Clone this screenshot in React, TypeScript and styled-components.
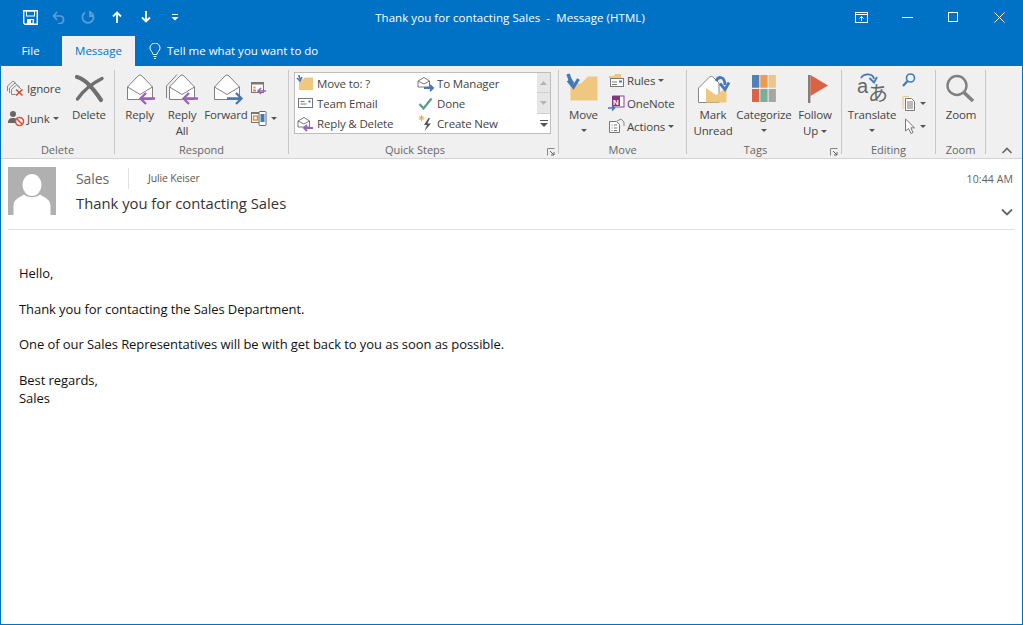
import React from "react";
import styled, { createGlobalStyle } from "styled-components";

const Global = createGlobalStyle`
  html, body { margin: 0; padding: 0; background: #fff; }
  body { font-family: "Open Sans", "Noto Sans", "Liberation Sans", sans-serif; }
`;

const Frame = styled.div`
  width: 1023px; height: 625px; box-sizing: border-box; background: #fff;
  border: 1px solid #0072c6; border-top: 0; display: flex; flex-direction: column; overflow: hidden;
`;
const TitleBar = styled.div`
  height: 36px; flex: none; box-sizing: border-box; padding-bottom: 2px; background: #0072c6; color: #fff;
  display: grid; grid-template-columns: 1fr auto 1fr; align-items: center;
`;
const Qat = styled.div`display: flex; align-items: center; padding-left: 20px; gap: 11px;`;
const QatBtn = styled.span`width: 18px; height: 18px; display: flex; align-items: center; justify-content: center;`;
const WindowTitle = styled.div`font-size: 11.5px; letter-spacing: 0.06px; white-space: pre; margin-left: -3px;`;
const WinControls = styled.div`display: flex; justify-content: flex-end; align-items: center;`;
const WinBtn = styled.span`width: 46px; height: 32px; display: flex; align-items: center; justify-content: center;`;

const TabBar = styled.div`
  height: 30px; flex: none; background: #0072c6; display: flex; align-items: stretch; color: #fff; font-size: 11.5px;
`;
const Tab = styled.div<{ $active?: boolean; $w: number; $pr?: number }>`
  width: ${p => p.$w}px; display: flex; align-items: center; justify-content: center; box-sizing: border-box;
  padding: 0 ${p => p.$pr ?? 0}px 1px 0;
  background: ${p => (p.$active ? "#f0f0f0" : "transparent")};
  color: ${p => (p.$active ? "#0072c6" : "#fff")};
`;
const TellMe = styled.div`display: flex; align-items: center; gap: 6px; margin-left: 14px; padding-bottom: 1px;`;

const Ribbon = styled.div`
  height: 93px; flex: none; box-sizing: border-box; background: #f0f0f0; border-bottom: 1px solid #d4d4d4;
  display: flex; padding-top: 4px; color: #444; font-size: 11.5px; letter-spacing: -0.15px; position: relative;
`;
const Group = styled.div<{ $w: number }>`
  width: ${p => p.$w}px; height: 84px; box-sizing: border-box; border-right: 1px solid #c8c8c8; flex: none;
  display: flex; flex-direction: column; position: relative;
`;
const GroupBody = styled.div<{ $pl?: number }>`
  flex: 1; display: flex; align-items: flex-start; padding-left: ${p => p.$pl ?? 0}px; min-height: 0;
`;
const GroupLabel = styled.div<{ $launcher?: boolean }>`
  height: 16px; line-height: 16px; margin-bottom: -4px; text-align: center; color: #666; font-size: 11px; letter-spacing: 0; flex: none;
  padding-right: ${p => (p.$launcher ? 17 : 0)}px;
`;
const Launcher = styled.svg`position: absolute; right: 3px; bottom: -2px;`;
const LargeBtn = styled.div<{ $w: number }>`
  width: ${p => p.$w}px; flex: none; display: flex; flex-direction: column; align-items: center; line-height: 16px;
  white-space: nowrap; text-align: center;
`;
const LargeIcon = styled.div`height: 37px; display: flex; align-items: center; justify-content: center;`;
const SmallCol = styled.div<{ $w?: number; $gap: number; $pt: number }>`
  ${p => (p.$w ? `width:${p.$w}px;` : "")} flex: none; display: flex; flex-direction: column; gap: ${p => p.$gap}px; padding-top: ${p => p.$pt}px;
`;
const SmallBtn = styled.div`display: flex; align-items: center; height: 18px; gap: 2px; white-space: nowrap;`;
const Caret = styled.i`
  display: inline-block; width: 0; height: 0; border-left: 3px solid transparent; border-right: 3px solid transparent;
  border-top: 3px solid #555; margin-left: 1px;
`;
const BlockCaret = styled(Caret)`display: block; margin: 6px 0 0 0;`;
const InlineCaret = styled(Caret)`margin-left: 3px; vertical-align: middle;`;
const Gallery = styled.div`
  margin: 2px 0 0 5px; width: 257px; height: 62px; box-sizing: border-box; background: #fff; border: 1px solid #bdbdbd;
  display: flex; position: relative;
`;
const GalleryGrid = styled.div`
  flex: 1; display: grid; grid-template-columns: 120px 1fr; grid-auto-rows: 20px;
`;
const GalleryItem = styled.div`display: flex; align-items: center; gap: 3px; padding-left: 2px; white-space: nowrap;`;
const GalleryIcon = styled.span`width: 17px; display: flex; justify-content: center;`;
const Scroll = styled.div`width: 13px; display: flex; flex-direction: column; flex: none;`;
const ScrollBtn = styled.div<{ $dim?: boolean }>`
  flex: 1; display: flex; align-items: center; justify-content: center;
  background: ${p => (p.$dim ? "#e6e6e6" : "#fff")};
  border-bottom: ${p => (p.$dim ? "1px solid #cfcfcf" : "0")};
`;
const Collapse = styled.svg`position: absolute; left: 1000px; top: 81px;`;

const Header = styled.div`
  margin: 8px 7px 0 7px; height: 62px; border-bottom: 1px solid #e1e1e1; flex: none; display: flex; position: relative;
`;
const Avatar = styled.svg`flex: none; display: block;`;
const HeaderText = styled.div`margin-left: 20px; display: flex; flex-direction: column;`;
const FromRow = styled.div`display: flex; align-items: center; height: 22px;`;
const Sender = styled.span`font-size: 14px; color: #666; width: 52px; border-right: 1px solid #e1e1e1; height: 21px; line-height: 21px; letter-spacing: -0.1px;`;
const Recipient = styled.span`font-size: 10.5px; color: #5f5a50; margin-left: 19px; letter-spacing: -0.15px;`;
const Subject = styled.div`font-size: 14.8px; color: #333; margin-top: 4px; line-height: 20px;`;
const Time = styled.div`position: absolute; right: 2px; top: 5px; font-size: 10.5px; color: #5f5f5f; letter-spacing: 0.1px;`;
const Expand = styled.svg`position: absolute; right: 2px; top: 41px;`;
const Body = styled.div`padding: 35px 0 0 18px; font-size: 13px; line-height: 17.8px; color: #111; letter-spacing: -0.07px;`;
const Line = styled.div`white-space: pre; min-height: 17.8px;`;

const IconBase = ({ w, h, children }: { w: number; h: number; children: React.ReactNode }) => (
  <svg width={w} height={h} viewBox={`0 0 ${w} ${h}`} fill="none" overflow="visible">{children}</svg>
);

const PURPLE = "#9a62b8";
const BLUE = "#4379b8";
const GREY = "#808080";
const FOLDER = "#efc77f";

const ArrowL = ({ x, y }: { x: number; y: number }) => (
  <path d={`M${x + 1} ${y}h15M${x + 7} ${y - 5.5}L${x + 1.5} ${y}L${x + 7} ${y + 5.5}`} stroke={PURPLE} strokeWidth={2.3} />
);
const ArrowR = ({ x, y }: { x: number; y: number }) => (
  <path d={`M${x} ${y}h15M${x + 9} ${y - 5.5}L${x + 14.5} ${y}L${x + 9} ${y + 5.5}`} stroke={BLUE} strokeWidth={2.3} />
);
const Env = ({ dx = 0 }: { dx?: number }) => (
  <g transform={`translate(${dx} 0)`}>
    <path d="M0.5 14L11 3C12.2 1.7 13.8 1.7 15 3L25.5 14V26.5H0.5Z" fill="#fff" stroke={GREY} />
    <path d="M0.5 14L13 21.5L25.5 14" stroke={GREY} />
  </g>
);
const ReplyIcon = () => (
  <IconBase w={32} h={32}><Env dx={3} /><ArrowL x={15} y={25.5} /></IconBase>
);
const ReplyAllIcon = () => (
  <IconBase w={34} h={32}>
    <path d="M1.5 13L12 1.5M1.5 13V25" stroke={GREY} />
    <Env dx={4} /><ArrowL x={17} y={25.5} />
  </IconBase>
);
const ForwardIcon = () => (
  <IconBase w={32} h={32}><Env dx={4} /><ArrowR x={17} y={25.5} /></IconBase>
);
const BigX = () => (
  <IconBase w={32} h={32}>
    <path d="M4 4C13 6 22 18 28 27" stroke="#6f6f6f" strokeWidth="4.2" strokeLinecap="round" />
    <path d="M29 5.5C20 10 10 18 4.5 26" stroke="#6f6f6f" strokeWidth="3.4" strokeLinecap="round" />
  </IconBase>
);
const IgnoreIcon = () => (
  <IconBase w={18} h={18}>
    <path d="M0.5 7L6 2l3 2.5M2.5 9L8 4l5 4.5M4.5 10.5L9.5 6l5 4.5M0.5 7v5M2.5 9v5M4.5 10.5v5h4" stroke="#888" />
    <path d="M9 10.5l6.5 6M15.5 10.5l-6.5 6" stroke="#d8503c" strokeWidth="1.7" />
  </IconBase>
);
const JunkIcon = () => (
  <IconBase w={18} h={18}>
    <circle cx="6" cy="5" r="3" fill="#666" />
    <path d="M1 14c0-4 2-5 5-5s5 1 5 5Z" fill="#666" />
    <circle cx="12.5" cy="12.5" r="4" fill="#fff" stroke="#d8503c" strokeWidth="1.6" />
    <path d="M10 10l5 5" stroke="#d8503c" strokeWidth="1.6" />
  </IconBase>
);
const MeetingIcon = () => (
  <IconBase w={18} h={16}>
    <rect x="1.5" y="2.5" width="12" height="10" fill="#fff" stroke="#777" />
    <rect x="1" y="2" width="13" height="2.5" fill="#777" />
    <rect x="3.5" y="6.5" width="2" height="2" fill="#e08a3c" />
    <rect x="3" y="9.5" width="3" height="2" fill="#e08a3c" />
    <path d="M8 11h8M11 8l-3 3 3 3" stroke={PURPLE} strokeWidth="1.6" />
  </IconBase>
);
const MoreRespondIcon = () => (
  <IconBase w={18} h={18}>
    <rect x="1.5" y="3.5" width="10" height="10" fill="#fff" stroke="#777" />
    <rect x="1" y="3" width="11" height="2" fill="#777" />
    <rect x="3.5" y="7" width="4" height="4" fill="none" stroke="#e08a3c" strokeWidth="1.4" />
    <rect x="9" y="2.5" width="7" height="14" rx="1" fill="#fff" stroke="#666" />
    <rect x="10.5" y="5" width="4" height="8" fill={BLUE} />
  </IconBase>
);
const FolderMove = () => (
  <IconBase w={17} h={15}>
    <path d="M2 6L8 1.5h8V14H2Z" fill={FOLDER} />
    <path d="M2 -1C2 1 2.5 2 3 3M0 2L3 5L5 1" stroke={BLUE} strokeWidth="1.6" />
  </IconBase>
);
const TeamEmail = () => (
  <IconBase w={15} h={12}>
    <rect x="0.5" y="1.5" width="14" height="9" fill="#fff" stroke="#777" />
    <path d="M2.5 4.5h4M2.5 7h6" stroke="#777" /><rect x="10.5" y="3.5" width="2" height="2" fill={BLUE} />
  </IconBase>
);
const MiniEnv = ({ c, left }: { c: string; left?: boolean }) => (
  <IconBase w={17} h={15}>
    <path d="M1 5L7 1.5L12.5 5V11H1Z" fill="#fff" stroke="#777" /><path d="M1 5L7 8L12.5 5" stroke="#777" />
    <path d={left ? "M7 12h9M10 9l-3 3 3 3" : "M7 12h9M13 9l3 3-3 3"} stroke={c} strokeWidth="1.8" />
  </IconBase>
);
const Check = () => (
  <IconBase w={15} h={13}><path d="M1.5 7L5.5 11.5L13.5 1.5" stroke="#5c9e8c" strokeWidth="2.4" /></IconBase>
);
const Bolt = () => (
  <IconBase w={15} h={16}>
    <path d="M10.5 3L6 10h3l-2.5 6L13 8.5H9.5L12 3Z" fill="#555" />
    <path d="M3.5 0v6M0.5 3h6M1.5 1l4 4M5.5 1l-4 4" stroke="#e8a33c" strokeWidth="0.9" />
  </IconBase>
);
const MoveBig = () => (
  <IconBase w={32} h={30}>
    <path d="M2.5 9.5L13 9.5L20 2.5H29.5V26.5H2.5Z" fill={FOLDER} />
    <path d="M0 0C1 4 2.5 7 5 10" stroke={BLUE} strokeWidth="3.4" />
    <path d="M0 6.5L5.5 13L10.5 5" fill="none" stroke={BLUE} strokeWidth="3.2" />
  </IconBase>
);
const RulesIcon = () => (
  <IconBase w={17} h={15}>
    <path d="M1 3h5l1-2h6v4H1Z" fill={FOLDER} />
    <rect x="2.5" y="5.5" width="13" height="8" fill="#fff" stroke="#777" />
    <path d="M4 9h5M4 11.5h5" stroke="#777" /><rect x="11" y="7.5" width="3" height="2" fill={BLUE} />
  </IconBase>
);
const OneNoteIcon = () => (
  <IconBase w={17} h={16}>
    <rect x="5" y="1" width="11" height="11" fill="#fff" stroke="#8e3f9e" />
    <rect x="4" y="1" width="8" height="10" fill="#80397b" />
    <text x="5" y="9.5" fontSize="8" fill="#fff" fontFamily="Liberation Sans" fontWeight="700">N</text>
    <path d="M0 13h6M4 10.5L6.5 13 4 15.5" stroke={BLUE} strokeWidth="1.6" />
  </IconBase>
);
const ActionsIcon = () => (
  <IconBase w={17} h={16}>
    <path d="M1.5 3.5h7l3 3v8h-10Z" fill="#fff" stroke="#777" />
    <path d="M3.5 7h1M6 7h3M3.5 10h1M6 10h3M3.5 12.5h1M6 12.5h3" stroke="#777" />
    <path d="M9 3L13 1l3 3v4" stroke="#888" />
  </IconBase>
);
const MarkUnread = () => (
  <IconBase w={32} h={30}>
    <path d="M1.5 14L12 3.5C13.5 2 15 2 16.5 3.5L22 9V28.5H1.5Z" fill="#fff" stroke="#888" />
    <path d="M9 14L19 21L29.5 14V28.5H9Z" fill={FOLDER} />
    <path d="M19 7C22 1 28 3 28 11" stroke={BLUE} strokeWidth="2.8" />
    <path d="M23 9.5L28 15.5L32 8.5" stroke={BLUE} strokeWidth="2.8" />
  </IconBase>
);
const Categorize = () => (
  <IconBase w={24} h={27}>
    <rect x="0" y="0" width="7.3" height="12.7" fill="#4f81bd" />
    <rect x="8.3" y="0" width="7.3" height="12.7" fill="#ec9c4c" />
    <rect x="16.6" y="0" width="7.3" height="12.7" fill="#e9c78a" />
    <rect x="0" y="14" width="7.3" height="13" fill="#d9644a" />
    <rect x="8.3" y="14" width="7.3" height="13" fill="#7cae9a" />
    <rect x="16.6" y="14" width="7.3" height="13" fill="#a6a6a6" />
  </IconBase>
);
const Flag = () => (
  <IconBase w={26} h={28}>
    <rect x="6" y="0" width="2.4" height="28" fill="#7f7f7f" />
    <path d="M8.4 0L26 10.5L8.4 21Z" fill="#dc6244" />
  </IconBase>
);
const TranslateIcon = () => (
  <IconBase w={34} h={34}>
    <text x="2" y="21" fontSize="20" fill="#666" fontFamily="Liberation Sans">a</text>
    <text x="13" y="29" fontSize="20" fill="#666" fontFamily="Noto Sans CJK JP">あ</text>
    <path d="M6 6C9 1 18 1 19 7" stroke={BLUE} strokeWidth="1.8" />
    <path d="M14.5 6L19 10.5L22 5" stroke={BLUE} strokeWidth="1.8" />
  </IconBase>
);
const FindIcon = () => (
  <IconBase w={16} h={16}>
    <circle cx="8.5" cy="6" r="4" stroke={BLUE} strokeWidth="1.6" />
    <path d="M5.5 9L1 14" stroke={BLUE} strokeWidth="2.2" />
  </IconBase>
);
const DocIcon = () => (
  <IconBase w={15} h={16}>
    <path d="M1 14V1.5H7" stroke={FOLDER} />
    <path d="M3.5 3.5h6l3 3v9h-9Z" fill="#fff" stroke="#777" />
    <path d="M5 7h6M5 9h6M5 11h6M5 13h6" stroke="#777" />
  </IconBase>
);
const CursorIcon = () => (
  <IconBase w={15} h={16}>
    <path d="M3.5 1V13L6.5 10.5L9 15.5L11 14.5L8.8 9.8H12.5Z" fill="#fff" stroke="#777" />
  </IconBase>
);
const ZoomIcon = () => (
  <IconBase w={30} h={30}>
    <circle cx="11" cy="11.5" r="9.5" stroke="#808080" strokeWidth="2.4" />
    <path d="M18 18.5L27 27" stroke="#808080" strokeWidth="3.6" />
  </IconBase>
);
const LauncherIcon = () => (
  <Launcher width={8} height={8} viewBox="0 0 8 8" fill="none">
    <path d="M0.5 7.5V0.5H7.5" stroke="#888" /><path d="M3 3L7 7M7 4V7H4" stroke="#666" />
  </Launcher>
);

const App = () => (
  <>
    <Global />
    <Frame>
      <TitleBar>
        <Qat>
          <QatBtn>
            <svg width="15" height="15" viewBox="0 0 15 15" fill="none">
              <path d="M0.7 0.7H14.3V14.3H2L0.7 13Z" stroke="#fff" strokeWidth="1.4" />
              <rect x="3.5" y="1" width="8" height="5" stroke="#fff" />
              <rect x="4" y="9" width="7" height="5.5" fill="#fff" /><rect x="8" y="10" width="1.6" height="3" fill="#0072c6" />
            </svg>
          </QatBtn>
          <QatBtn>
            <svg width="14" height="14" viewBox="0 0 14 14" fill="none" stroke="#5a9fd8" strokeWidth="1.7">
              <path d="M1.5 6h7.5a4 4 0 0 1 0 7.5H6M5 2L1.5 6L5 10" />
            </svg>
          </QatBtn>
          <QatBtn>
            <svg width="14" height="14" viewBox="0 0 14 14" fill="none" stroke="#5a9fd8" strokeWidth="1.8">
              <path d="M4 2.5A5.6 5.6 0 1 0 10 2.5M9 1v5h4" />
            </svg>
          </QatBtn>
          <QatBtn>
            <svg width="10" height="12" viewBox="0 0 10 12" fill="none" stroke="#fff" strokeWidth="1.8">
              <path d="M5 12V1.5M1 5.5L5 1.5L9 5.5" />
            </svg>
          </QatBtn>
          <QatBtn>
            <svg width="10" height="12" viewBox="0 0 10 12" fill="none" stroke="#fff" strokeWidth="1.8">
              <path d="M5 0V10.5M1 6.5L5 10.5L9 6.5" />
            </svg>
          </QatBtn>
          <QatBtn>
            <svg width="8" height="7" viewBox="0 0 8 7">
              <rect x="1" y="0" width="6" height="1" fill="#fff" /><path d="M0.5 3h7L4 6.5Z" fill="#fff" />
            </svg>
          </QatBtn>
        </Qat>
        <WindowTitle>Thank you for contacting Sales  -  Message (HTML)</WindowTitle>
        <WinControls>
          <WinBtn>
            <svg width="13" height="11" viewBox="0 0 13 11" fill="none" stroke="#fff">
              <rect x="0.5" y="0.5" width="12" height="10" /><path d="M0.5 2.5h12M6.5 9V4.5M4.5 6.5l2-2 2 2" />
            </svg>
          </WinBtn>
          <WinBtn><svg width="11" height="1"><rect width="11" height="1" fill="#fff" /></svg></WinBtn>
          <WinBtn><svg width="10" height="10" fill="none" stroke="#fff"><rect x="0.5" y="0.5" width="9" height="9" /></svg></WinBtn>
          <WinBtn><svg width="11" height="11" fill="none" stroke="#fff"><path d="M0.5 0.5L10.5 10.5M10.5 0.5L0.5 10.5" /></svg></WinBtn>
        </WinControls>
      </TitleBar>
      <TabBar>
        <Tab $w={61} $pr={2}>File</Tab>
        <Tab $w={73} $active>Message</Tab>
        <TellMe>
          <svg width="12" height="16" viewBox="0 0 12 16" fill="none" stroke="#fff">
            <path d="M4 11.5C4 9 1 8 1 5a5 5 0 0 1 10 0c0 3-3 4-3 6.5ZM4.5 13.5h3M5 15.5h2" />
          </svg>
          Tell me what you want to do
        </TellMe>
      </TabBar>
      <Ribbon>
        <Group $w={114}>
          <GroupBody $pl={6}>
            <SmallCol $w={58} $gap={12} $pt={9}>
              <SmallBtn><IgnoreIcon />Ignore</SmallBtn>
              <SmallBtn><JunkIcon />Junk<Caret /></SmallBtn>
            </SmallCol>
            <LargeBtn $w={48}><LargeIcon><BigX /></LargeIcon>Delete</LargeBtn>
          </GroupBody>
          <GroupLabel>Delete</GroupLabel>
        </Group>
        <Group $w={174}>
          <GroupBody $pl={2}>
            <LargeBtn $w={45}><LargeIcon><ReplyIcon /></LargeIcon>Reply</LargeBtn>
            <LargeBtn $w={40}><LargeIcon><ReplyAllIcon /></LargeIcon>Reply<br />All</LargeBtn>
            <LargeBtn $w={48}><LargeIcon><ForwardIcon /></LargeIcon>Forward</LargeBtn>
            <SmallCol $gap={12} $pt={9}>
              <SmallBtn><MeetingIcon /></SmallBtn>
              <SmallBtn><MoreRespondIcon /><Caret /></SmallBtn>
            </SmallCol>
          </GroupBody>
          <GroupLabel>Respond</GroupLabel>
        </Group>
        <Group $w={270}>
          <GroupBody>
            <Gallery>
              <GalleryGrid>
                <GalleryItem><GalleryIcon><FolderMove /></GalleryIcon>Move to: ?</GalleryItem>
                <GalleryItem><GalleryIcon><MiniEnv c={BLUE} /></GalleryIcon>To Manager</GalleryItem>
                <GalleryItem><GalleryIcon><TeamEmail /></GalleryIcon>Team Email</GalleryItem>
                <GalleryItem><GalleryIcon><Check /></GalleryIcon>Done</GalleryItem>
                <GalleryItem><GalleryIcon><MiniEnv c={PURPLE} left /></GalleryIcon>Reply &amp; Delete</GalleryItem>
                <GalleryItem><GalleryIcon><Bolt /></GalleryIcon>Create New</GalleryItem>
              </GalleryGrid>
              <Scroll>
                <ScrollBtn $dim><svg width="7" height="4"><path d="M0 4L3.5 0L7 4Z" fill="#b5b5b5" /></svg></ScrollBtn>
                <ScrollBtn $dim><svg width="7" height="4"><path d="M0 0L3.5 4L7 0Z" fill="#b5b5b5" /></svg></ScrollBtn>
                <ScrollBtn><svg width="8" height="7"><rect x="0" y="0" width="8" height="1" fill="#555" /><path d="M0 3h8L4 7Z" fill="#555" /></svg></ScrollBtn>
              </Scroll>
            </Gallery>
          </GroupBody>
          <GroupLabel $launcher>Quick Steps</GroupLabel>
          <LauncherIcon />
        </Group>
        <Group $w={128}>
          <GroupBody>
            <LargeBtn $w={49}><LargeIcon><MoveBig /></LargeIcon>Move<BlockCaret /></LargeBtn>
            <SmallCol $gap={5} $pt={1}>
              <SmallBtn><RulesIcon />Rules<Caret /></SmallBtn>
              <SmallBtn><OneNoteIcon />OneNote</SmallBtn>
              <SmallBtn><ActionsIcon />Actions<Caret /></SmallBtn>
            </SmallCol>
          </GroupBody>
          <GroupLabel>Move</GroupLabel>
        </Group>
        <Group $w={155}>
          <GroupBody>
            <LargeBtn $w={52}><LargeIcon><MarkUnread /></LargeIcon>Mark<br />Unread</LargeBtn>
            <LargeBtn $w={50}><LargeIcon><Categorize /></LargeIcon>Categorize<BlockCaret /></LargeBtn>
            <LargeBtn $w={52}><LargeIcon><Flag /></LargeIcon>Follow<span>Up<InlineCaret /></span></LargeBtn>
          </GroupBody>
          <GroupLabel $launcher>Tags</GroupLabel>
          <LauncherIcon />
        </Group>
        <Group $w={94}>
          <GroupBody>
            <LargeBtn $w={60}><LargeIcon><TranslateIcon /></LargeIcon>Translate<BlockCaret /></LargeBtn>
            <SmallCol $gap={5} $pt={1}>
              <SmallBtn><FindIcon /></SmallBtn>
              <SmallBtn><DocIcon /><Caret /></SmallBtn>
              <SmallBtn><CursorIcon /><Caret /></SmallBtn>
            </SmallCol>
          </GroupBody>
          <GroupLabel>Editing</GroupLabel>
        </Group>
        <Group $w={50}>
          <GroupBody>
            <LargeBtn $w={50}><LargeIcon><ZoomIcon /></LargeIcon>Zoom</LargeBtn>
          </GroupBody>
          <GroupLabel>Zoom</GroupLabel>
        </Group>
        <Collapse width={12} height={7} viewBox="0 0 12 7" fill="none"><path d="M1.5 6L6 1.5L10.5 6" stroke="#666" strokeWidth="1.6" /></Collapse>
      </Ribbon>
      <Header>
        <Avatar width={48} height={48} viewBox="0 0 48 48">
          <rect width="48" height="48" fill="#b0b0b0" />
          <path d="M5.5 48V39C5.5 32 11 31 16 27.5C19 31 29 31 32 27.5C37 31 42.5 32 42.5 39V48Z" fill="#fff" />
          <ellipse cx="24" cy="18" rx="9.5" ry="11" fill="#fff" />
        </Avatar>
        <HeaderText>
          <FromRow><Sender>Sales</Sender><Recipient>Julie Keiser</Recipient></FromRow>
          <Subject>Thank you for contacting Sales</Subject>
        </HeaderText>
        <Time>10:44 AM</Time>
        <Expand width={12} height={8} viewBox="0 0 12 8" fill="none"><path d="M1 1.5L6 6.5L11 1.5" stroke="#666" strokeWidth="1.8" /></Expand>
      </Header>
      <Body>
        <Line>Hello,</Line>
        <Line> </Line>
        <Line>Thank you for contacting the Sales Department.</Line>
        <Line> </Line>
        <Line>One of our Sales Representatives will be with get back to you as soon as possible.</Line>
        <Line> </Line>
        <Line>Best regards,</Line>
        <Line>Sales</Line>
      </Body>
    </Frame>
  </>
);

export default App;
